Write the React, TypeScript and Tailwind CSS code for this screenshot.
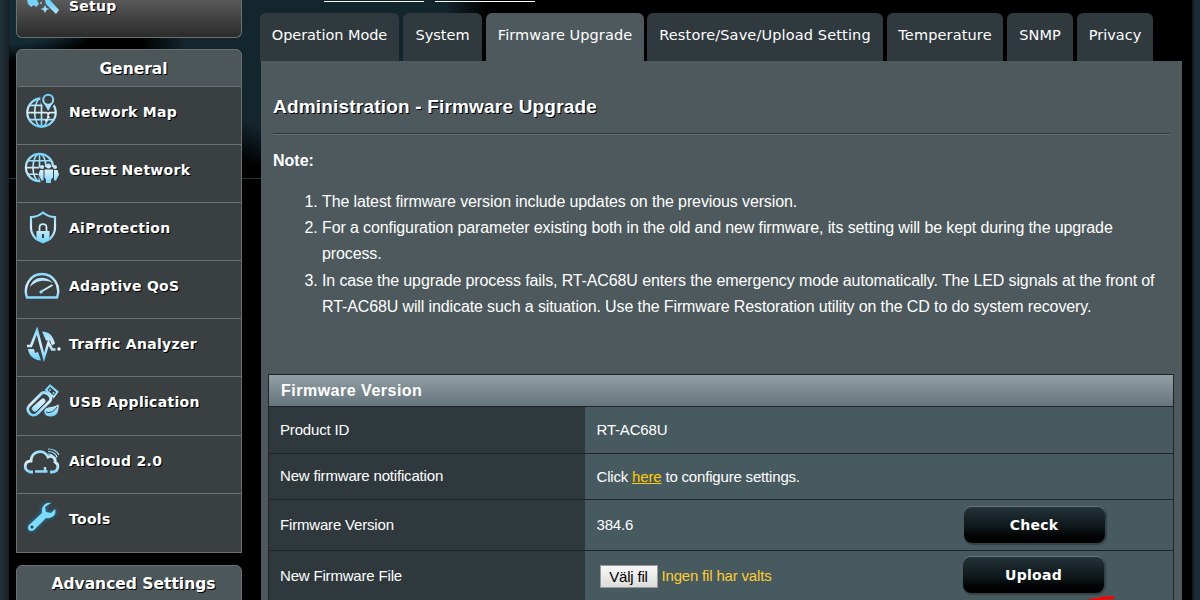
import React from "react";

const verdana = "font-['DejaVu_Sans',Verdana,sans-serif]";
const shadow = "[text-shadow:1px_1px_0_#000]";

function Svg({ children, className = "" }: { children: React.ReactNode; className?: string }) {
  return (
    <svg viewBox="0 0 40 40" className={"h-10 w-10 shrink-0 " + className} fill="none" stroke="url(#ice)" strokeWidth="2">
      {children}
    </svg>
  );
}

function Globe({ cx, cy, r }: { cx: number; cy: number; r: number }) {
  return (
    <g strokeWidth="1.6">
      <circle cx={cx} cy={cy} r={r} strokeWidth="2.2" />
      <ellipse cx={cx} cy={cy} rx={r * 0.48} ry={r} />
      <path d={`M${cx} ${cy - r}V${cy + r}M${cx - r} ${cy + 0.1}H${cx + r}M${cx - r * 0.85} ${cy - r * 0.5}H${cx + r * 0.85}M${cx - r * 0.85} ${cy + r * 0.5}H${cx + r * 0.85}`} />
    </g>
  );
}

const icons: Record<string, React.ReactNode> = {
  map: (
    <Svg>
      <Globe cx={18.5} cy={20.5} r={14.2} />
      <path d="M25-1C17-1 16 7 18.500 12l6.700 9 6.300-9c3-5 1-13-6.500-13z" fill="#3a3f41" stroke="none" />
      <path d="M20.500 10.500h9.500l-4.800 8.500z" fill="#9fe0fb" stroke="none" />
      <circle cx="25.200" cy="7.700" r="5" fill="#3a3f41" strokeWidth="2" />
      <path d="M25.500 20.500v2M25.500 24v2M24 27.500l-1.500 2" stroke="#fff" />
    </Svg>
  ),
  guest: (
    <Svg>
      <Globe cx={16.5} cy={17.5} r={13.6} />
      <path d="M14 21l3-4h20v14l-9 5-10-3z" fill="#3a3f41" stroke="none" />
      <g fill="url(#ice)" stroke="none">
        <circle cx="25.500" cy="16" r="2.500" /><circle cx="19" cy="17" r="2" /><circle cx="32" cy="17" r="2" />
        <path d="M21.500 19.500h8.500v8l-2 2v3.500h-5v-3.500l-1.500-2zM17 20h3.500v10.500h-2l-3-6zM31 20h3.500l1.500 4.500-3 6h-2z" />
      </g>
    </Svg>
  ),
  shield: (
    <Svg>
      <path d="M13.500 31.500c-3-3-5.500-7-5.500-11.500V9c4 0 8-1 12-4.500C24 8 28 9 32 9v11c0 4.500-2.500 8.500-5.500 11.500" strokeWidth="2.200" />
      <path d="M16.500 23v-3.500c0-4.500 7-4.500 7 0V23" strokeWidth="1.800" />
      <path d="M13.500 23h13v9.500l-6.500 3-6.500-3z" fill="url(#ice)" stroke="none" />
      <path d="M20 26v4" stroke="#3a3f41" />
    </Svg>
  ),
  gauge: (
    <Svg>
      <path d="M4 31.500c-4-11 3-23.500 15-23.500s19 12.500 15 23.500z" strokeWidth="2.400" />
      <path d="M7 21C10 10 23 9 30 17c-7-4-17-3-23 4z" fill="url(#ice)" stroke="none" />
      <path d="M17.500 26l12-7" strokeWidth="2" />
      <circle cx="18" cy="26" r="1.600" fill="#8edfff" stroke="none" />
    </Svg>
  ),
  traffic: (
    <Svg>
      <path d="M19 7.500c7 0 11 4 13 12l-3 2-2-5-4 0zM5 25l6 0 1 4 3-1 3 8.500c-6 0-12-4-13-11.500z" fill="url(#ice)" stroke="none" />
      <path d="M4 22h4l6-15.500 7 27 4.500-15 3.500 7h3.500" strokeWidth="2.600" />
      <circle cx="36" cy="25" r="1.700" fill="#e6f7ff" stroke="none" />
    </Svg>
  ),
  usb: (
    <Svg>
      <path d="M6 24L19 11c4-2 11 4 8 8L14 32c-5 4-12-3-8-8z" strokeWidth="2.800" />
      <path d="M10 25l9-8c3-1 4 2 2 4l-8 8c-3 1-5-2-3-4z" fill="url(#ice)" strokeWidth="1" />
      <path d="M23 8l4-4.500 7.500 6.500-4 5z" strokeWidth="2" />
      <path d="M26.500 7.500l1 1M30 10.500l1 1" />
      <path d="M21 28c3-5 9-2 15-6.500 1 8-2 13.500-8.500 13.500-4.500 0-7.500-3-6.500-7z" fill="url(#ice)" stroke="#3a3f41" strokeWidth="1" />
      <path d="M23 30c5 2 9-2 11-5" stroke="#3a3f41" strokeWidth="1" />
    </Svg>
  ),
  cloud: (
    <Svg>
      <path d="M10 31H7c-7-2-6-11 1-11 0-10 13-13 17-4 4-2 8 1 7 5 5 3 3 10-3 10h-2" strokeWidth="2.800" />
      <path d="M12 30.500h12.500M22 31v-5" strokeWidth="2.400" />
      <path d="M25 13c3 0 5 1 6 4M25 10.500c5 0 8 2 9 6M25 8c6 0 9 2 11 6" strokeWidth="1.200" />
    </Svg>
  ),
  tools: (
    <Svg className="[filter:drop-shadow(0_0_2px_#1683b8)]">
      <path d="M28 4c-5-1-10 3-9 10L6 26c-3 4 1 8 5 5l12-12c6 1 11-3 9-9l-4 4-5-1-1-5z" fill="#7edcfd" stroke="none" />
      <circle cx="9" cy="28" r="1.500" fill="#3a3f41" stroke="none" />
    </Svg>
  ),
};

const menu = [
  ["map", "Network Map"],
  ["guest", "Guest Network"],
  ["shield", "AiProtection"],
  ["gauge", "Adaptive QoS"],
  ["traffic", "Traffic Analyzer"],
  ["usb", "USB Application"],
  ["cloud", "AiCloud 2.0"],
  ["tools", "Tools"],
];

function Sidebar() {
  return (
    <aside className={`ml-4 w-[226px] shrink-0 font-bold text-white ${verdana} ${shadow}`}>
      <div className="flex h-[38px] items-start rounded-b-md border border-t-0 border-[#6b7071] bg-linear-to-b from-[#5a5a5a] to-[#2b2b2b]">
        <svg viewBox="0 0 36 14" className="ml-2 h-3.5 w-9 shrink-0" fill="url(#ice)">
          <path d="M2 0h10l2 4-3 3-2-2-3 2-3-3zM20 0h5l9 10-3 4L21 4zM20 5l1.500 3 3 1-3 1-1.500 3-1.500-3-3-1 3-1z" />
          <circle cx="16" cy="3" r="1" />
        </svg>
        <span className="ml-2 text-sm leading-[12px] tracking-[0.25px]">Setup</span>
      </div>
      <div className="mt-[11px] flex h-[38px] items-center justify-center rounded-t-md border border-[#6b7071] bg-[#4d5659] pt-[3px] pl-[9px] text-[15.5px]">
        <span>General</span>
      </div>
      <nav className="border border-t-0 border-[#6b7071] bg-[#3a3f41]">
        {menu.map(([icon, label]) => (
          <div key={icon} className="flex h-[58px] items-start border-b border-[#6b7071] pt-[5px] pl-[6px] last:border-b-0 nth-6:h-[59px]">
            {icons[icon]}
            <span className="ml-[6px] mt-2.5 text-sm leading-5 tracking-[0.29px] whitespace-nowrap">{label}</span>
          </div>
        ))}
      </nav>
      <div className="mt-3 flex h-[38px] items-center justify-center rounded-t-md border border-[#6b7071] bg-[#4d5659] pt-0.5 pl-[9px] text-[15.5px] whitespace-nowrap">
        <span>Advanced Settings</span>
      </div>
    </aside>
  );
}

function Tabs() {
  const tab = "flex h-12 items-center justify-center rounded-t-md pb-[2px] text-[14.5px] whitespace-nowrap";
  return (
    <div className={`mt-[13px] -ml-px flex text-white ${verdana}`}>
      <div className={`${tab} w-[139px] tracking-[-0.06px] bg-[#30393d]`}>Operation Mode</div>
      <div className={`${tab} ml-1 w-[79px] bg-[#30393d]`}>System</div>
      <div className={`${tab} ml-1 w-[158px] tracking-[0.08px] bg-[#4d595d]`}>Firmware Upgrade</div>
      <div className={`${tab} ml-[3px] w-[236px] tracking-[0.14px] bg-[#30393d]`}>Restore/Save/Upload Setting</div>
      <div className={`${tab} ml-1 w-[116px] tracking-[0.14px] bg-[#30393d]`}>Temperature</div>
      <div className={`${tab} ml-1 w-[66px] bg-[#30393d]`}>SNMP</div>
      <div className={`${tab} ml-1 w-[76px] bg-[#30393d]`}>Privacy</div>
    </div>
  );
}

function Row({ h, label, children }: { h: string; label: string; children: React.ReactNode }) {
  return (
    <div className={`flex border-t border-[#212324] ${h}`}>
      <div className="flex w-[316px] items-center bg-[#2f383d] pl-[11px]">{label}</div>
      <div className="flex flex-1 items-center bg-[#475a5f] pl-[11.5px]">{children}</div>
    </div>
  );
}

function Button({ children, className = "" }: { children: string; className?: string }) {
  return (
    <button className={`flex h-[36px] w-[141px] items-center justify-center rounded-lg bg-linear-to-b from-[#24343a] via-[#0b1214] via-65% to-black text-sm font-bold tracking-[0.27px] text-white shadow-[0_-1px_0_#66777c,1px_1px_1px_1px_#354246] ${verdana} ${className}`}>
      {children}
    </button>
  );
}

export default function App() {
  return (
    <div className="relative flex h-[600px] w-[1200px] overflow-hidden bg-[#1d2a33] font-['Liberation_Sans',Arial,sans-serif] text-[15px] text-white">
      <svg className="absolute h-0 w-0" aria-hidden="true">
        <defs>
          <linearGradient id="ice" gradientUnits="userSpaceOnUse" x1="0" y1="4" x2="0" y2="36">
            <stop offset="0" stopColor="#75d3fb" />
            <stop offset=".5" stopColor="#d9effb" />
            <stop offset="1" stopColor="#68d0fb" />
          </linearGradient>
        </defs>
      </svg>
      <div className="w-[9px] shrink-0 bg-linear-to-r from-[#22313c] to-[#182026]" />
      <div className="flex w-[1183px] shrink-0 bg-black bg-[linear-gradient(#193642,#193642),radial-gradient(ellipse_175px_155px_at_305px_20px,#14262d_75%,transparent),radial-gradient(ellipse_110px_62px_at_0px_0px,#142b34_70%,transparent)] bg-[length:252px_1px,560px_178px,252px_178px] bg-[position:0_178px,0_0,0_0] bg-no-repeat">
        <div className="-ml-[9px] flex">
          <Sidebar />
        </div>
        <main className="ml-[19px] w-[921px] shrink-0">
          <div className="relative">
            <div className="absolute top-0 left-[63px] flex gap-[11px]">
              <div className="h-0.5 w-[100px] border-b border-white" />
              <div className="h-0.5 w-[100px] border-b border-white" />
            </div>
          </div>
          <Tabs />
          <section className="h-[539px] bg-[#4d595d]">
            <div className="px-3 pt-[33px]">
              <h1 className={`border-b border-[#2f3a3e] pb-3.5 text-[19px] leading-[25px] font-bold tracking-[0.19px] ${shadow}`}>Administration - Firmware Upgrade</h1>
              <div className="h-px bg-[#647277]" />
              <p className="mt-4 text-base leading-5 font-bold">Note:</p>
              <ol className="mt-[18px] list-decimal pl-[49px] text-base leading-[26.2px] tracking-[-0.115px] whitespace-nowrap">
                <li>The latest firmware version include updates on the previous version.</li>
                <li>For a configuration parameter existing both in the old and new firmware, its setting will be kept during the upgrade<br />process.</li>
                <li>In case the upgrade process fails, RT-AC68U enters the emergency mode automatically. The LED signals at the front of<br />RT-AC68U will indicate such a situation. Use the Firmware Restoration utility on the CD to do system recovery.</li>
              </ol>
            </div>
            <div className="mt-[54px] ml-[7px] w-[906px] border border-b-0 border-[#212324] tracking-[-0.18px]">
              <div className="flex h-[31px] items-center bg-linear-to-b from-[#92a0a5] to-[#66757c] pl-3 text-base font-bold tracking-[0.5px]">Firmware Version</div>
              <Row h="h-[47px]" label="Product ID"><span className="pt-px">RT-AC68U</span></Row>
              <Row h="h-[46px]" label="New firmware notification">
                <span className="pt-0.5">Click <a className="text-[#fc0] underline">here</a> to configure settings.</span>
              </Row>
              <Row h="h-[51px]" label="Firmware Version">
                <span className="w-[367px]">384.6</span>
                <Button>Check</Button>
              </Row>
              <Row h="h-[51px]" label="New Firmware File">
                <div className="flex w-[366.5px] items-center">
                  <button className="ml-[3px] h-[23px] w-[58px] border border-[#999] bg-linear-to-b from-[#f8f8f8] to-[#dcdcdc] text-black">Välj fil</button>
                  <span className="ml-1 text-[#fc3]">Ingen fil har valts</span>
                </div>
                <Button className="mb-0.5">Upload</Button>
              </Row>
            </div>
          </section>
        </main>
      </div>
      <div className="flex-1 border-l-2 border-[#151a1d] bg-[#1c2c37]" />
      <svg className="absolute top-[595px] left-[1086px] h-[5px] w-7" viewBox="0 0 28 5" fill="none" stroke="#f00" strokeWidth="3" strokeLinecap="round">
        <path d="M4 5.500L13 4.500L17 3L27 2.500" />
      </svg>
    </div>
  );
}
